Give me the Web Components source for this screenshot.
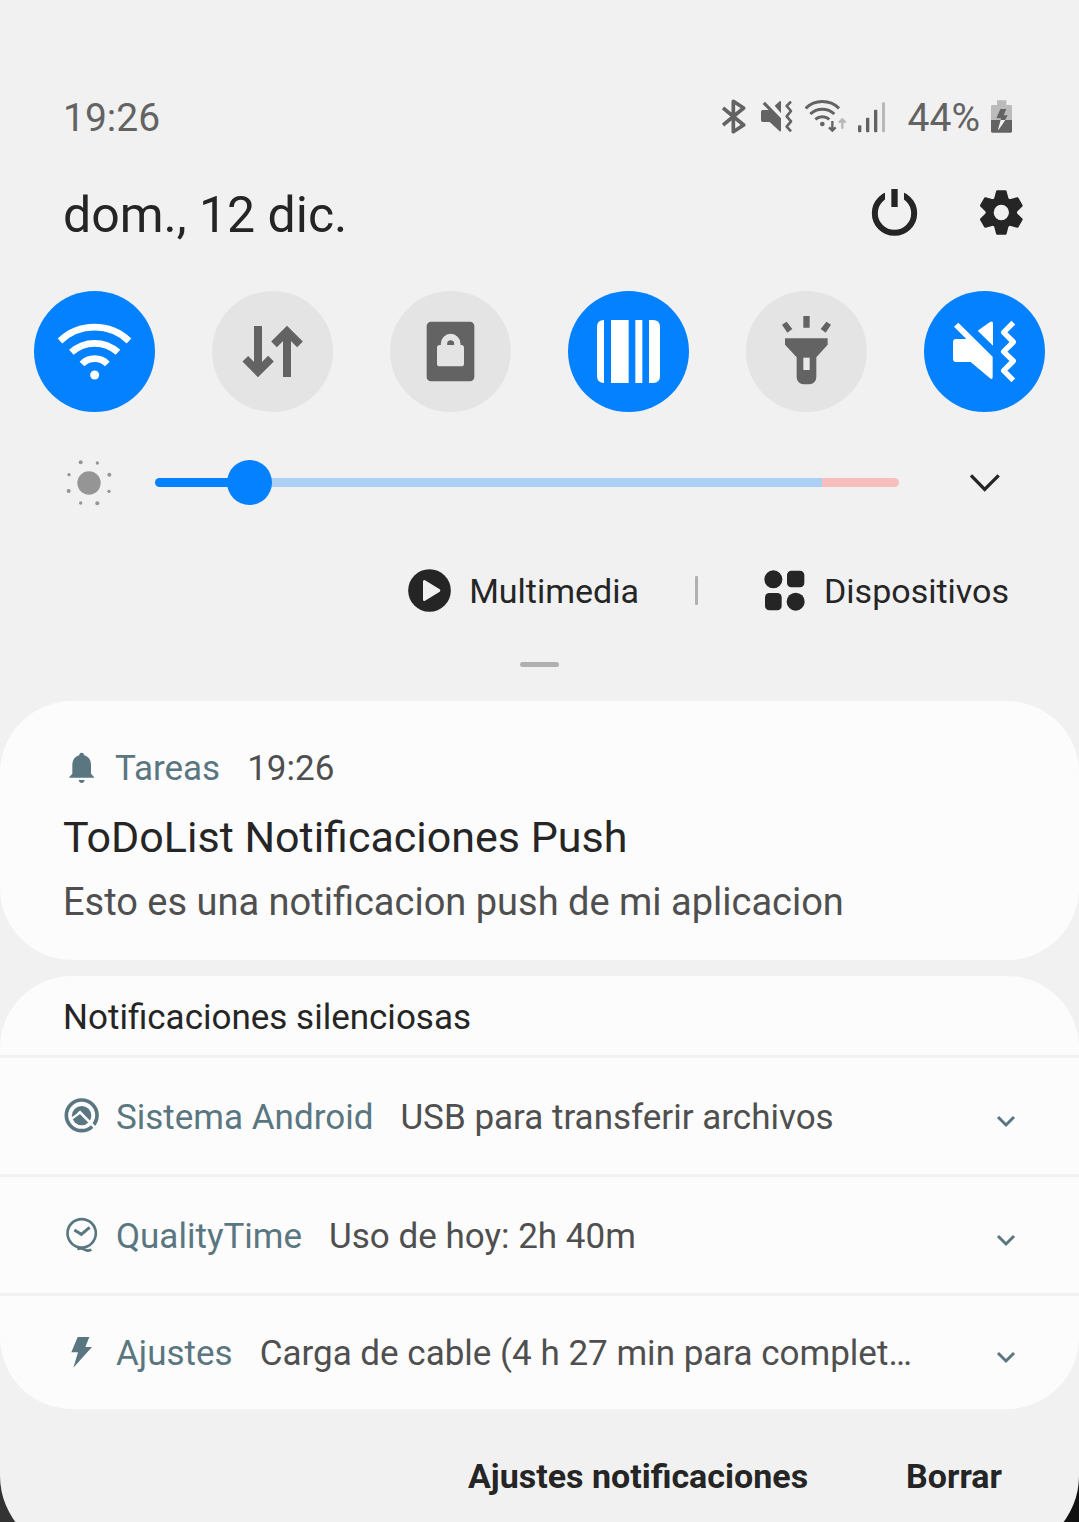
<!DOCTYPE html>
<html lang="es">
<head>
<meta charset="utf-8">
<meta name="viewport" content="width=device-width, initial-scale=1">
<title>Panel de notificaciones</title>
<style>
html { background: linear-gradient(90deg, #333 0%, #111 100%); }
body { margin: 0; font-family: Roboto, "Liberation Sans", sans-serif; color: #252525; }
</style>
</head>
<body>
<notification-shade></notification-shade>
<script>
const ICONS = {
  bluetooth: ['66 54 87 105', '<path d="M69 81L131 132L100 152V61L131 81L69 132" fill="none" stroke="currentColor" stroke-width="11" stroke-linejoin="round"/>'],
  vibrate: ['183 54 99 105', '<path d="M188 69L195 62L243 112V148q0 5-4 3L209 123H188q-5 0-5-5V92q0-5 5-5H206ZM224 74L239 61q4-2 4 2V97Z" fill="currentColor"/><path d="M273 62L260 75L273 90L260 106L273 121L260 137L273 151" fill="none" stroke="currentColor" stroke-width="8" stroke-linejoin="round"/>'],
  wifiSmall: ['312 54 129 105', '<g fill="none" stroke="currentColor" stroke-width="9"><path d="M317 82A72 72 0 0 1 417 82M331 99A52 52 0 0 1 403 99M346 115A32 32 0 0 1 388 115"/><path d="M397 120V149M387 139L397 149L407 139" stroke-width="7"/><path d="M427 143V114M417 125L427 115L437 125" stroke="#b8b8b8" stroke-width="7"/></g><circle cx="367" cy="129" r="7" fill="currentColor"/>'],
  signal: ['471 54 123 105', '<g fill="currentColor"><rect x="474" y="133" width="10" height="21" rx="3"/><rect x="498" y="110" width="10" height="44" rx="3"/><rect x="522" y="86" width="10" height="68" rx="3"/><rect x="546" y="64" width="9" height="90" rx="3" fill="#b8b8b8"/></g>'],
  battery: ['870 54 69 105', '<path d="M891 58H919V72H932q4 0 4 4V117H873V76q0-4 4-4H891Z" fill="#bbb"/><path d="M873 117H936V151q0 4-4 4H877q-4 0-4-4Z" fill="currentColor"/><path d="M901 84H919L911 103H923L915 117H902L903 112H889Z" fill="currentColor"/><path d="M902 117H916L896 146H894Z" fill="#f1f1f1"/>'],
  power: ['513 324 144 147', '<circle cx="583.500" cy="399.500" r="59" fill="none" stroke="currentColor" stroke-width="18"/><path d="M555 324H612V365H555Z" fill="#f1f1f1"/><path d="M574 327H593V381H574Z" fill="currentColor"/>'],
  gear: ['837 324 135 147', '<g fill="currentColor" stroke="currentColor" stroke-width="8" stroke-linejoin="round"><circle cx="904" cy="397.500" r="43"/>' + [0,60,120,180,240,300].map(a => `<path d="M892 335H916L923 362H885Z" transform="rotate(${a} 904 397.500)"/>`).join('') + '</g><circle cx="904" cy="397.500" r="23" fill="#f1f1f1"/>'],
  wifi: ['42 33 363 363', '<g fill="none" stroke="currentColor" stroke-width="20"><path d="M120 183A150 150 0 0 1 327 183M154 217A104 104 0 0 1 294 217M186 252A53 53 0 0 1 262 252"/></g><circle cx="224" cy="285" r="13.500" fill="currentColor"/>'],
  data: ['576 33 363 363', '<path d="M714 138V272M676 236L714 275L753 236M801 291V158M762 193L801 154L840 193" fill="none" stroke="currentColor" stroke-width="24"/>'],
  lock: ['60 33 363 363', '<rect x="170" y="125" width="143" height="179" rx="13" fill="currentColor"/><rect x="201" y="195" width="81" height="64" rx="8" fill="#e4e4e4"/><path d="M222 200V191a20 20 0 0 1 40 0V200" fill="none" stroke="#e4e4e4" stroke-width="19"/>'],
  barcode: ['594 33 363 363', '<path d="M702 120V309q-21 0-21-21V141q0-21 21-21ZM723 120H776V309H723ZM796 120H817V309H796ZM837 120H849q21 0 21 21V288q0 21-21 21H837Z" fill="currentColor"/>'],
  torch: ['48 33 363 363', '<g fill="currentColor"><path d="M220 108H239V143H220ZM156 134L170 125L187 147L172 158ZM303 134L289 125L272 147L287 158Z"/><path d="M165 175H293V194L259 232V292a21 21 0 0 1-21 21H221a21 21 0 0 1-21-21V232L165 194Z"/></g><path d="M220 233H239V270H220Z" fill="#e9e9e9"/>'],
  vibrateTile: ['582 33 363 363', '<path d="M672 140L685 128L788 230V291q0 9-8 4L722 246H678q-9 0-9-9V186q0-9 9-9H709ZM743 152L780 126q9-4 9 4V197Z" fill="currentColor"/><path d="M850 128L821 157L850 186L821 215L850 243L821 272L850 301" fill="none" stroke="currentColor" stroke-width="16" stroke-linejoin="round"/>'],
  sun: ['78 57 138 144', '<g fill="#959595"><circle cx="147" cy="129" r="35"/><circle cx="122" cy="67" r="6"/><circle cx="172" cy="69" r="5"/><circle cx="208" cy="104" r="6"/><circle cx="207" cy="154" r="5"/><circle cx="172" cy="190" r="6"/><circle cx="122" cy="189" r="5"/><circle cx="86" cy="153" r="6"/><circle cx="87" cy="104" r="5"/></g>'],
  chevron: ['564 90 102 87', '<path d="M573 109L614 151L656 109" fill="none" stroke="currentColor" stroke-width="10"/>'],
  chevronSmall: ['0 0 24 24', '<path d="M4 9L12 17L20 9" fill="none" stroke="currentColor" stroke-width="3"/>'],
  play: ['30 57 129 129', '<circle cx="94.500" cy="121.500" r="64" fill="currentColor"/><path d="M79 94V149L123 121.500Z" fill="#f1f1f1" stroke="#f1f1f1" stroke-width="8" stroke-linejoin="round"/>'],
  devices: ['1095 57 126 129', '<g fill="currentColor"><circle cx="1123" cy="88" r="27"/><rect x="1164" y="62" width="52" height="50" rx="13"/><rect x="1098" y="129" width="50" height="52" rx="13"/><circle cx="1190" cy="155" r="27"/></g>'],
  bell: ['72 57 108 105', '<path d="M118 72q0-7 7-7t7 7q21 7 21 30V128L162 138V140H88V138L97 128V102q0-23 21-30ZM116 147H134q-2 9-9 9t-9-9Z" fill="currentColor"/>'],
  android: ['72 54 108 105', '<circle cx="125" cy="106" r="46" fill="none" stroke="currentColor" stroke-width="11"/><circle cx="125" cy="107" r="29" fill="currentColor"/><path d="M90 119L120 97L168 146" fill="none" stroke="#fcfcfc" stroke-width="8"/><path d="M96 108L112 96" stroke="currentColor" stroke-width="5"/>'],
  quality: ['72 408 108 105', '<g fill="none" stroke="currentColor"><circle cx="125" cy="457" r="42.500" stroke-width="8"/><path d="M103 447L124 460L149 439" stroke-width="9"/><path d="M112 504Q124 500 134 506T154 506" stroke-width="8"/></g>'],
  bolt: ['72 762 108 105', '<path d="M113 768H148L136 798H156L100 860L114 814H94Z" fill="currentColor"/>']
};

function define(name, css, html, setup) {
  const template = document.createElement('template');
  template.innerHTML = `<style>:host,*{box-sizing:border-box}button{font:inherit;color:inherit;background:none;border:0;padding:0;margin:0;cursor:pointer}${css}</style>${html}`;
  customElements.define(name, class extends HTMLElement {
    constructor() {
      super();
      this.attachShadow({ mode: 'open' }).append(template.content.cloneNode(true));
    }
    connectedCallback() { if (setup) setup(this, this.shadowRoot); }
  });
}

function makeIcon(name) {
  const icon = document.createElement('ui-icon');
  icon.setAttribute('name', name);
  return icon;
}

define('ui-icon', `:host{display:block;flex:none} svg{display:block}`, ``, (host, root) => {
  const name = host.getAttribute('name');
  const [box, shapes] = ICONS[name];
  const [, , w, h] = box.split(' ').map(Number);
  const unit = name === 'chevronSmall' ? 1 : 3;
  root.innerHTML += `<svg aria-hidden="true" viewBox="${box}" width="${w / unit}" height="${h / unit}">${shapes}</svg>`;
});

define('status-bar', `
  :host{display:flex;align-items:center;justify-content:space-between;height:48px;padding:0 66px 0 63px;color:#636363;font-size:39px;line-height:48px}
  .icons{display:flex;align-items:center;gap:10px}
  ui-icon{padding-bottom:4px}`,
  `<time>19:26</time>
   <div class="icons"><ui-icon name="bluetooth"></ui-icon><ui-icon name="vibrate"></ui-icon><ui-icon name="wifiSmall"></ui-icon><ui-icon name="signal"></ui-icon><span>44%</span><ui-icon name="battery"></ui-icon></div>`);

define('date-header', `
  :host{display:flex;align-items:center;justify-content:space-between;height:66px;margin-top:40px;padding:0 55px 0 63px;font-size:50px;line-height:66px}
  .actions{display:flex;gap:60px;padding-bottom:5px}`,
  `<span>dom., 12 dic.</span>
   <div class="actions"><button aria-label="Apagar"><ui-icon name="power"></ui-icon></button><button aria-label="Ajustes"><ui-icon name="gear"></ui-icon></button></div>`);

define('quick-tile', `
  :host{display:block}
  button{display:block;border-radius:50%;background:#e4e4e4;color:#636363}
  :host([on]) button{background:#0381fe;color:#fff}`,
  `<button></button>`, (host, root) => {
    const button = root.querySelector('button');
    button.setAttribute('aria-label', host.getAttribute('label'));
    button.setAttribute('aria-pressed', host.hasAttribute('on'));
    button.replaceChildren(makeIcon(host.getAttribute('icon')));
  });

define('quick-tiles', `:host{display:flex;justify-content:space-between;margin-top:43px;padding:0 34px}`, `<slot></slot>`);

define('brightness-bar', `
  :host{display:flex;align-items:center;height:48px;margin-top:46px;padding:0 77px 0 66px}
  input{-webkit-appearance:none;appearance:none;flex:1;min-width:0;height:45px;margin:0 69px 0 43px;background:none}
  input::-webkit-slider-runnable-track{height:9px;border-radius:5px;background:linear-gradient(90deg,#0381fe 0 12%,#abd0f3 12% 89.6%,#f6bfbd 89.6%)}
  input::-webkit-slider-thumb{-webkit-appearance:none;width:45px;height:45px;margin-top:-18px;border:0;border-radius:50%;background:#0381fe}
  ui-icon{padding-top:2px}`,
  `<ui-icon name="sun"></ui-icon><input type="range" min="0" max="1000" value="103" aria-label="Brillo"><button aria-label="Más opciones de brillo"><ui-icon name="chevron"></ui-icon></button>`);

define('media-bar', `
  :host{display:flex;align-items:center;justify-content:flex-end;height:48px;margin-top:60px;padding-right:70px;font-size:34px;line-height:48px}
  button{display:flex;align-items:center;gap:18px}
  span{padding-top:2px}
  i{width:3px;height:29px;margin:0 66px 0 56px;border-radius:1px;background:#b0b0b0}`,
  `<button><ui-icon name="play"></ui-icon><span>Multimedia</span></button><i></i><button><ui-icon name="devices"></ui-icon><span>Dispositivos</span></button>`);

define('drag-handle', `:host{display:block;width:39px;height:5px;margin:48px auto 34px;border-radius:3px;background:#b0b0b0}`, ``);

define('notification-card', `
  :host{display:block;padding:45px 63px 34px;border-radius:72px;background:#fcfcfc}
  header{display:flex;align-items:center;gap:16px;font-size:35px;line-height:46px;color:#5a7680}
  ui-icon{padding:0 0 4px 1px;margin-right:-1px}
  time{margin-left:11px;color:#4f4f4f}
  h2{margin:13px 0 9px;font-size:43px;line-height:64px;font-weight:400}
  p{margin:0;font-size:38px;line-height:48px;color:#4f4f4f}`,
  `<header><ui-icon name="bell"></ui-icon><slot name="app"></slot><time><slot name="time"></slot></time></header><h2><slot name="title"></slot></h2><p><slot></slot></p>`);

define('silent-group', `
  :host{display:block;margin-top:16px;border-radius:72px;background:#fcfcfc;overflow:hidden}
  h2{margin:0;padding:18px 63px 13px;font-size:35px;line-height:48px;font-weight:400}`,
  `<h2>Notificaciones silenciosas</h2><slot></slot>`);

define('notification-row', `
  :host{display:flex;align-items:center;height:119px;padding:3px 61px 0 64px;border-top:3px solid #f1f1f1;font-size:35px;line-height:48px;color:#5a7680}
  :host(:last-child){height:116px}
  ui-icon{padding-bottom:4px}
  .name{margin-left:16px;white-space:nowrap}
  .text{flex:1;min-width:0;margin:0 64px 0 27px;overflow:hidden;text-overflow:ellipsis;white-space:nowrap;color:#4f4f4f}
  button ui-icon{padding:4px 0 0}`,
  `<span class="name"><slot name="app"></slot></span><span class="text"><slot></slot></span><button aria-label="Expandir"><ui-icon name="chevronSmall"></ui-icon></button>`, (host, root) => {
    root.querySelector('.name').before(makeIcon(host.getAttribute('icon')));
  });

define('panel-footer', `
  :host{display:flex;justify-content:flex-end;gap:98px;padding:43px 77px 0 64px;font-size:34px;line-height:48px;font-weight:700}`,
  `<button>Ajustes notificaciones</button><button>Borrar</button>`);

define('notification-shade', `
  :host{display:block;min-height:100vh;padding-top:94px;background:#f1f1f1;clip-path:inset(0 0 -30px 0 round 0 0 76px 76px)}`,
  `<status-bar></status-bar>
   <date-header></date-header>
   <quick-tiles>
     <quick-tile icon="wifi" label="Wi-Fi" on></quick-tile>
     <quick-tile icon="data" label="Datos móviles"></quick-tile>
     <quick-tile icon="lock" label="Bloqueo"></quick-tile>
     <quick-tile icon="barcode" label="Código de barras" on></quick-tile>
     <quick-tile icon="torch" label="Linterna"></quick-tile>
     <quick-tile icon="vibrateTile" label="Vibrar" on></quick-tile>
   </quick-tiles>
   <brightness-bar></brightness-bar>
   <media-bar></media-bar>
   <drag-handle></drag-handle>
   <notification-card><span slot="app">Tareas</span><span slot="time">19:26</span><span slot="title">ToDoList Notificaciones Push</span>Esto es una notificacion push de mi aplicacion</notification-card>
   <silent-group>
     <notification-row icon="android"><span slot="app">Sistema Android</span>USB para transferir archivos</notification-row>
     <notification-row icon="quality"><span slot="app">QualityTime</span>Uso de hoy: 2h 40m</notification-row>
     <notification-row icon="bolt"><span slot="app">Ajustes</span>Carga de cable (4 h 27 min para complet…</notification-row>
   </silent-group>
   <panel-footer></panel-footer>`);
</script>
</body>
</html>
